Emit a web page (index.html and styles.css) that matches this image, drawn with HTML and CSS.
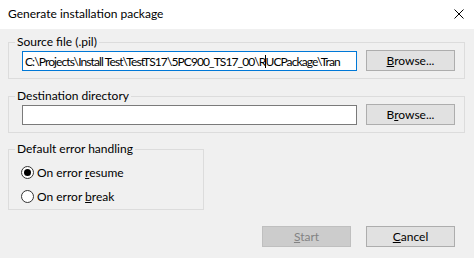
FILE: index.html
```html
<!DOCTYPE html>
<html lang="en">

<head>
  <meta charset="UTF-8">
  <title>Generate installation package</title>
  <link rel="stylesheet" href="styles.css">
</head>

<body>
  <div class="window">
    <div class="title_bar">
      <span class="title">Generate installation package</span>
      <svg class="close" width="10" height="10" viewBox="0 0 10 10">
        <path d="M0.5 0.5L9.5 9.5M9.5 0.5L0.5 9.5" stroke="#000000" stroke-width="1" fill="none" />
      </svg>
    </div>
    <div class="content">
      <fieldset class="group">
        <legend>Source file (.pil)</legend>
        <div class="row">
          <div class="text_box focused">
            <span class="text_value">C:\Projects\Install Test\TestTS17\5PC900_TS17_00\R<span class="caret"></span>UCPackage\Tran</span>
          </div>
          <button class="button"><u>B</u>rowse...</button>
        </div>
      </fieldset>
      <fieldset class="group">
        <legend>Destination directory</legend>
        <div class="row">
          <div class="text_box"></div>
          <button class="button">B<u>r</u>owse...</button>
        </div>
      </fieldset>
      <fieldset class="group small">
        <legend>Default error handling</legend>
        <label class="radio">
          <span class="radio_mark checked"></span>
          <span>On error <u>r</u>esume</span>
        </label>
        <label class="radio">
          <span class="radio_mark"></span>
          <span>On error <u>b</u>reak</span>
        </label>
      </fieldset>
      <div class="actions">
        <button class="button disabled"><u>S</u>tart</button>
        <button class="button"><u>C</u>ancel</button>
      </div>
    </div>
  </div>
</body>

</html>
```

FILE: styles.css
```css
* {
  box-sizing: border-box;
  margin: 0;
  padding: 0;
}

body {
  background-color: #f0f0f0;
  color: #000000;
  font-family: Lato, "Liberation Sans", sans-serif;
  font-size: 12px;
  height: 258px;
  overflow: hidden;
  width: 474px;
}

.window {
  display: flex;
  flex-direction: column;
  height: 258px;
}

.title_bar {
  align-items: center;
  background-color: #ffffff;
  display: flex;
  height: 29px;
  justify-content: space-between;
  padding: 0 10px 0 8px;
}

.title {
  font-size: 12px;
  padding-bottom: 2px;
}

.close {
  display: block;
  margin-bottom: 2px;
}

.content {
  display: flex;
  flex-direction: column;
  padding: 5px 9px 0 8px;
}

.group {
  border: 1px solid #dcdcdc;
  min-width: 0;
  padding: 0 9px 7px 13px;
}

.group + .group {
  margin-top: 9px;
}

.group legend {
  line-height: 16px;
  margin-left: -7px;
  padding: 0 2px;
}

.group.small {
  margin-top: 8px;
  padding: 3px 0 1px 13px;
  width: 196px;
}

.row {
  align-items: center;
  display: flex;
  gap: 9px;
}

.text_box {
  background-color: #ffffff;
  border: 1px solid #7a7a7a;
  flex: 1;
  height: 20px;
  min-width: 0;
  overflow: hidden;
  padding: 2px 2px 0;
  white-space: nowrap;
}

.text_box.focused {
  border-color: #0078d7;
}

.text_value {
  letter-spacing: -0.9px;
  line-height: 15px;
}

.caret {
  border-left: 1px solid #000000;
  display: inline-block;
  height: 13px;
  margin: 0 -1px 0 0;
  vertical-align: -2px;
}

.button {
  background-color: #e1e1e1;
  border: 1px solid #adadad;
  color: #000000;
  flex-shrink: 0;
  font-family: inherit;
  font-size: 12px;
  height: 21px;
  width: 89px;
}

.button.disabled {
  background-color: #cccccc;
  border-color: #bfbfbf;
  color: #838383;
}

.radio {
  align-items: center;
  display: flex;
  gap: 3px;
  height: 24px;
  margin-left: -1px;
}

.radio_mark {
  background-color: #ffffff;
  border: 1px solid #333333;
  border-radius: 50%;
  height: 13px;
  position: relative;
  width: 13px;
}

.radio_mark.checked::after {
  background-color: #000000;
  border-radius: 50%;
  content: "";
  height: 7px;
  left: 2px;
  position: absolute;
  top: 2px;
  width: 7px;
}

.actions {
  display: flex;
  gap: 15px;
  justify-content: flex-end;
  margin: 16px 10px 0 0;
}
```
